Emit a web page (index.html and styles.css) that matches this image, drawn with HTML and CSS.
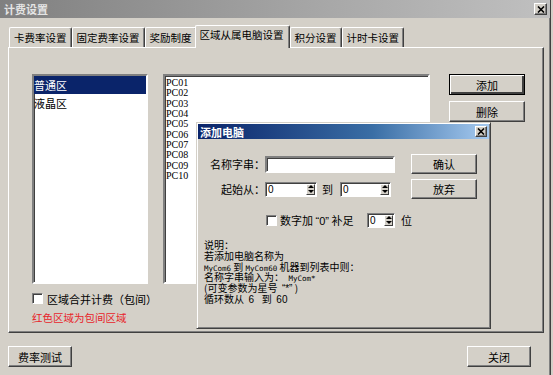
FILE: index.html
```html
<!DOCTYPE html>
<html lang="zh-CN">
<head>
  <meta charset="UTF-8" />
  <title>计费设置</title>
  <link rel="stylesheet" href="styles.css">
</head>
<body>
  <div class="window">
    <div class="titlebar">
      <span class="title">计费设置</span>
      <button class="cap-btn"><svg width="8" height="7" viewBox="0 0 8 7"><path d="M1 0.5 L7 6.5 M7 0.5 L1 6.5" stroke="#000" stroke-width="1.6"/></svg></button>
    </div>

    <div class="tabs">
      <div class="tab">卡费率设置</div>
      <div class="tab">固定费率设置</div>
      <div class="tab">奖励制度</div>
      <div class="tab active">区域从属电脑设置</div>
      <div class="tab">积分设置</div>
      <div class="tab">计时卡设置</div>
    </div>

    <div class="panel">
      <div class="zone-col">
        <ul class="listbox zones">
          <li class="sel">普通区</li>
          <li>液晶区</li>
        </ul>
        <div class="check-row">
          <span class="checkbox"></span>
          <span>区域合并计费（包间）</span>
        </div>
        <p class="note">红色区域为包间区域</p>
      </div>
      <ul class="listbox pcs">
        <li>PC01</li>
        <li>PC02</li>
        <li>PC03</li>
        <li>PC04</li>
        <li>PC05</li>
        <li>PC06</li>
        <li>PC07</li>
        <li>PC08</li>
        <li>PC09</li>
        <li>PC10</li>
      </ul>
      <div class="side-btns">
        <button class="btn default">添加</button>
        <button class="btn">删除</button>
      </div>
    </div>

    <div class="footer">
      <button class="btn">费率测试</button>
      <button class="btn">关闭</button>
    </div>

    <!-- modal dialog over the tab page -->
    <div class="dialog">
      <div class="dlg-title">
        <span>添加电脑</span>
        <button class="cap-btn"><svg width="8" height="7" viewBox="0 0 8 7"><path d="M1 0.5 L7 6.5 M7 0.5 L1 6.5" stroke="#000" stroke-width="1.6"/></svg></button>
      </div>
      <div class="dlg-body">
        <div class="dlg-row">
          <span class="dlg-label">名称字串：</span>
          <div class="dlg-field"><span class="textbox name"></span></div>
          <button class="btn dlg-btn">确认</button>
        </div>
        <div class="dlg-row">
          <span class="dlg-label">起始从：</span>
          <div class="dlg-field">
            <span class="spin wide">0<span class="spin-btn"><i class="up"></i><i class="down"></i></span></span>
            <span class="to">到</span>
            <span class="spin">0<span class="spin-btn"><i class="up"></i><i class="down"></i></span></span>
          </div>
          <button class="btn dlg-btn">放弃</button>
        </div>
        <div class="pad-row">
          <span class="checkbox"></span>
          <span class="pad-text">数字加 <span class="latin">“0”</span> 补足</span>
          <span class="spin small">0<span class="spin-btn"><i class="up"></i><i class="down"></i></span></span>
          <span class="unit">位</span>
        </div>
        <div class="explain">
          <p>说明：</p>
          <p>若添加电脑名称为</p>
          <p><span class="mono">MyCom6</span> 到 <span class="mono">MyCom60</span> 机器到列表中则：</p>
          <p>名称字串输入为：&nbsp; <span class="mono">MyCom*</span></p>
          <p>(可变参数为星号&nbsp; <span class="latin">“*”</span> )</p>
          <p>循环数从&nbsp; <span class="latin">6&nbsp;&nbsp;</span> 到&nbsp; <span class="latin">60</span></p>
        </div>
      </div>
    </div>
  </div>
</body>
</html>
```

FILE: styles.css
```css
* {
  box-sizing: border-box;
  margin: 0;
  padding: 0;
}

body {
  font-family: "Noto Sans CJK SC", "Liberation Sans", sans-serif;
  font-size: 11px;
  background-color: #d4d0c8;
  color: #000;
}

.window {
  position: relative;
  width: 551px;
  height: 375px;
  background-color: #d4d0c8;
  border-right: 1px solid #404040;
  box-shadow: inset -1px 0 #808080;
}

.titlebar {
  height: 18px;
  display: flex;
  align-items: center;
  justify-content: space-between;
  padding: 0 3px 0 4px;
  background: linear-gradient(to right, #808080, #a8a8a8 60%, #c0c0c0);
  color: #e4e4e4;
}

.title {
  font-size: 11px;
  font-weight: bold;
  line-height: 1;
}

.cap-btn {
  width: 13px;
  height: 12px;
  display: flex;
  align-items: center;
  justify-content: center;
  background-color: #d4d0c8;
  border: 1px solid;
  border-color: #fff #404040 #404040 #fff;
  box-shadow: inset -1px -1px #808080;
}

/* tab strip */
.tabs {
  display: flex;
  align-items: flex-end;
  height: 22px;
  margin-top: 7px;
  padding-left: 9px;
  position: relative;
  z-index: 1;
}

.tab {
  height: 20px;
  padding: 0 4px;
  font-size: 10.5px;
  line-height: 19px;
  white-space: nowrap;
  border-top: 1px solid #fff;
  border-left: 1px solid #fff;
  border-right: 1px solid #404040;
  box-shadow: inset -1px 0 #808080;
  border-radius: 2px 2px 0 0;
}

.tab.active {
  height: 23px;
  margin: 0 -1px -1px -2px;
  padding: 0 5px 0 4px;
  line-height: 18px;
  background-color: #d4d0c8;
}

.tab.active + .tab {
  margin-left: 1px;
}

.panel {
  display: flex;
  align-items: flex-start;
  width: 536px;
  height: 286px;
  margin-left: 8px;
  padding: 26px 0 0 23px;
  border: 1px solid;
  border-color: #fff #404040 #404040 #fff;
  box-shadow: inset -1px -1px #808080;
}

.listbox {
  list-style: none;
  height: 210px;
  background-color: #fff;
  border: 2px solid;
  border-color: #808080 #fff #fff #808080;
  box-shadow: inset 1px 1px #404040;
  overflow: hidden;
}

.zone-col {
  width: 116px;
}

.zones li {
  height: 18px;
  line-height: 18px;
  font-size: 11px;
}

.zones li.sel {
  background-color: #0a246a;
  color: #fff;
}

.pcs {
  width: 267px;
  margin-left: 15px;
  padding: 2px 0 0 1px;
}

.pcs li {
  font-family: "Liberation Serif", serif;
  font-size: 10px;
  line-height: 10.35px;
}

.check-row {
  display: flex;
  align-items: center;
  gap: 4px;
  margin-top: 9px;
  height: 11px;
  white-space: nowrap;
}

.checkbox {
  width: 11px;
  height: 11px;
  flex: none;
  background-color: #fff;
  border: 1px solid;
  border-color: #808080 #fff #fff #808080;
  box-shadow: inset 1px 1px #404040;
}

.note {
  margin-top: 6px;
  color: #e8242a;
  font-size: 10.5px;
  white-space: nowrap;
}

.side-btns {
  display: flex;
  flex-direction: column;
  gap: 6px;
  margin-left: 19px;
}

.btn {
  width: 76px;
  height: 21px;
  font-family: "Noto Sans CJK SC", sans-serif;
  font-size: 11px;
  background-color: #d4d0c8;
  color: #000;
  border: 1px solid;
  border-color: #fff #404040 #404040 #fff;
  box-shadow: inset -1px -1px #808080;
}

.btn.default {
  border-color: #000;
  box-shadow: inset 1px 1px #fff, inset -2px -2px #404040;
}

.footer {
  display: flex;
  justify-content: space-between;
  margin-top: 13px;
  padding: 0 19px 0 8px;
}

.footer .btn {
  width: 64px;
}

/* dialog */
.dialog {
  position: absolute;
  left: 196px;
  top: 122px;
  width: 295px;
  height: 207px;
  z-index: 2;
  background-color: #d4d0c8;
  border: 1px solid;
  border-color: #d4d0c8 #404040 #404040 #d4d0c8;
  box-shadow: inset 1px 1px #fff, inset -1px -1px #808080;
  padding: 1px;
}

.dlg-title {
  height: 15px;
  display: flex;
  align-items: center;
  justify-content: space-between;
  padding: 0 2px;
  background: linear-gradient(to right, #0a246a, #3a6ea5 60%, #a6caf0);
  color: #fff;
  font-weight: bold;
  font-size: 11px;
}

.dlg-title .cap-btn {
  width: 12px;
  height: 11px;
}

.dlg-body {
  padding-top: 15px;
}

.dlg-row {
  display: flex;
  align-items: center;
  height: 20px;
  margin-bottom: 5px;
}

.dlg-label {
  width: 67px;
  text-align: right;
  white-space: nowrap;
}

.dlg-field {
  width: 130px;
  display: flex;
  align-items: center;
}

.textbox {
  display: block;
  width: 130px;
  height: 17px;
  background-color: #fff;
  border: 2px solid;
  border-color: #808080 #fff #fff #808080;
  box-shadow: inset 1px 1px #404040;
}

.dlg-btn {
  width: 66px;
  height: 20px;
  margin-left: 16px;
}

.spin {
  position: relative;
  display: flex;
  align-items: center;
  width: 51px;
  height: 15px;
  padding-left: 2px;
  background-color: #fff;
  border: 1px solid;
  border-color: #808080 #fff #fff #808080;
  box-shadow: inset 1px 1px #404040;
  font-family: "Liberation Sans", sans-serif;
  font-size: 10px;
}

.spin.wide {
  width: 52px;
}

.spin.small {
  width: 28px;
}

.spin-btn {
  position: absolute;
  right: 1px;
  top: 1px;
  bottom: 1px;
  width: 9px;
  display: flex;
  flex-direction: column;
  align-items: center;
  justify-content: center;
  gap: 2px;
  background-color: #d4d0c8;
  border: 1px solid;
  border-color: #fff #404040 #404040 #fff;
}

.spin-btn i {
  width: 0;
  height: 0;
  border-left: 3px solid transparent;
  border-right: 3px solid transparent;
}

.spin-btn .up {
  border-bottom: 3px solid #000;
}

.spin-btn .down {
  border-top: 3px solid #000;
}

.to {
  margin: 0 7px 0 5px;
}

.pad-row {
  display: flex;
  align-items: center;
  height: 12px;
  margin: 15px 0 0 68px;
  white-space: nowrap;
}

.pad-text {
  margin-left: 3px;
  width: 87px;
}

.latin {
  font-family: "Liberation Sans", sans-serif;
}

.unit {
  margin-left: 6px;
}

.explain {
  margin: 14px 0 0 6px;
  font-size: 10px;
  line-height: 10.8px;
  white-space: nowrap;
}

.explain p {
  height: 10.8px;
}

.mono {
  font-family: "DejaVu Sans Mono", monospace;
  font-size: 7.5px;
  line-height: 1;
}
```
